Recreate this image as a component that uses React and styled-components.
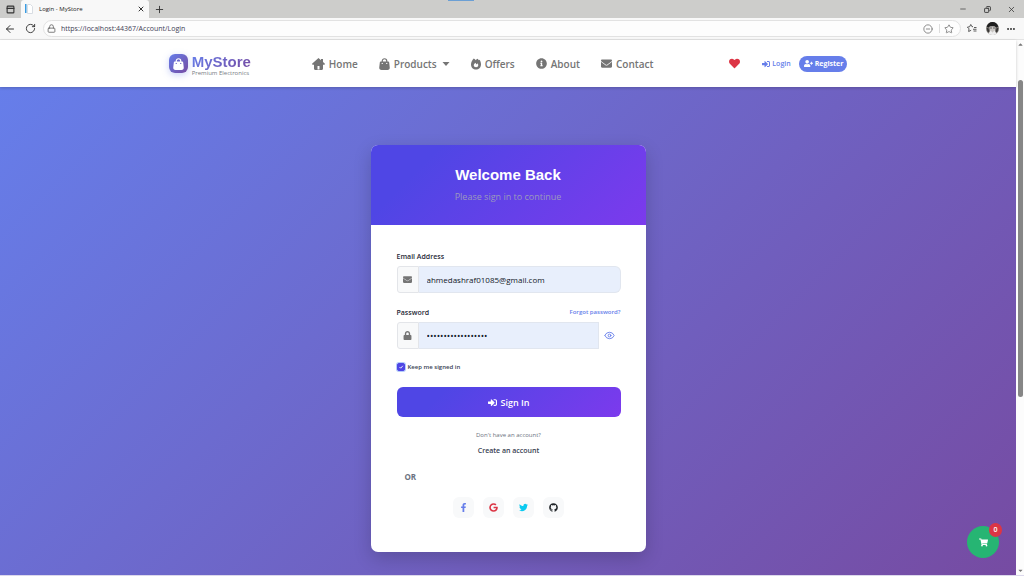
import React, { useState } from 'react';
import styled, { createGlobalStyle } from 'styled-components';
import {
  FaInfoCircle,
  FaEnvelope,
  FaHeart,
  FaSignInAlt,
  FaUserPlus,
  FaLock,
  FaCaretDown,
  FaCaretUp,
  FaFacebookF,
  FaGoogle,
  FaTwitter,
  FaGithub,
  FaShoppingCart,
} from 'react-icons/fa';
import { ArrowLeft, RotateCw, Lock, CircleMinus, Star, X, Plus, Minus, Copy, Ellipsis, Eye, PanelTop } from 'lucide-react';

const GlobalStyle = createGlobalStyle`
  * {
    box-sizing: border-box;
  }

  body {
    margin: 0;
    font-family: "Open Sans", "Noto Sans", sans-serif;
    color: #212529;
  }

  button, input {
    font-family: inherit;
  }

  button {
    padding: 0;
    border: 0;
    background: none;
    color: inherit;
    cursor: pointer;
  }

  a {
    text-decoration: none;
    color: inherit;
  }
`;

const Window = styled.div`
  display: flex;
  flex-direction: column;
  min-height: 100vh;
  border-bottom: 1px solid #dcd8ec;
  background: #fff;
`;

/* browser frame */

const TabStrip = styled.div`
  display: flex;
  align-items: center;
  height: 18px;
  background: linear-gradient(to right, transparent 448px, #6b9fd4 448px, #6b9fd4 474px, transparent 474px) top / 100% 1px no-repeat #cdcdcb;
`;

const IconButton = styled.button`
  display: flex;
  align-items: center;
  justify-content: center;
  align-self: center;
  flex: none;
  width: ${(props) => props.$width || 20}px;
  height: 16px;
  color: ${(props) => props.$color || '#333'};
`;

const Tab = styled.div`
  display: flex;
  align-items: center;
  gap: 6px;
  width: 128px;
  height: 18px;
  padding-left: 4px;
  border-radius: 3px 3px 0 0;
  background: #f8f8f8;
  font-size: 6px;
  color: #222;
`;

const TabTitle = styled.span`
  flex: 1;
`;

const WindowControls = styled.div`
  display: flex;
  margin-left: auto;
  padding-right: 1px;
`;

const Toolbar = styled.div`
  display: flex;
  align-items: center;
  height: 22px;
  padding-right: 3px;
  border-bottom: 1px solid #e4e4e4;
  background: #f8f8f8;
`;

const AddressBar = styled.div`
  display: flex;
  align-items: center;
  flex: 1;
  height: 17px;
  margin-left: 3px;
  padding: 0 2px 0 3px;
  border: 1px solid #e2e2e2;
  border-radius: 9px;
  background: #fdfdfd;
`;

const AddressInput = styled.input`
  flex: 1;
  min-width: 0;
  margin-left: 5px;
  padding: 0;
  border: 0;
  outline: 0;
  background: none;
  font-size: 7px;
  color: #3d3d55;
`;

const AddressDivider = styled.span`
  width: 1px;
  height: 9px;
  background: #ddd;
`;

const Viewport = styled.div`
  display: flex;
  flex: 1;
`;

const Page = styled.div`
  display: flex;
  flex-direction: column;
  flex: 1;
`;

const Scrollbar = styled.div`
  display: flex;
  flex-direction: column;
  align-items: center;
  justify-content: space-between;
  width: 8px;
  padding: 1px 0;
  background: #fcfcfc;
  color: #777;
`;

const ScrollTrack = styled.div`
  flex: 1;
  width: 5px;
  padding-top: 32px;
`;

const ScrollThumb = styled.div`
  height: 65%;
  border-radius: 3px;
  background: #868686;
`;

/* site header */

const Header = styled.header`
  display: flex;
  justify-content: center;
  position: relative;
  height: 47px;
  background: #fff;
  box-shadow: 0 1px 3px rgba(0, 0, 0, 0.2);
`;

const HeaderContainer = styled.div`
  display: flex;
  align-items: center;
  width: 67%;
  padding: 0 1px;
`;

const Brand = styled.a`
  display: flex;
  align-items: center;
  gap: 4px;
`;

const BrandLogo = styled.span`
  display: flex;
  align-items: center;
  justify-content: center;
  width: 19px;
  height: 19px;
  border-radius: 6px;
  background: linear-gradient(135deg, #667eea, #764ba2);
  box-shadow: 0 2px 7px rgba(102, 126, 234, 0.35);
  color: #fff;
`;

const BrandText = styled.span`
  display: flex;
  flex-direction: column;
  padding-top: 3px;
`;

const BrandName = styled.span`
  font-family: "Liberation Sans", Arial, sans-serif;
  font-size: 15px;
  font-weight: bold;
  line-height: 16px;
  background: linear-gradient(135deg, #667eea, #764ba2);
  background-clip: text;
  color: transparent;
`;

const BrandTagline = styled.span`
  font-size: 6px;
  line-height: 7px;
  color: #777c82;
`;

const Nav = styled.nav`
  display: flex;
  align-items: center;
  gap: 21px;
  margin-left: 61px;
`;

const NavLink = styled.a`
  display: flex;
  align-items: center;
  gap: 4px;
  font-size: 10px;
  font-weight: 600;
  color: #757575;
`;

const HeaderActions = styled.div`
  display: flex;
  align-items: center;
  margin-left: auto;
  font-size: 7px;
  font-weight: 600;
`;

const WishlistLink = styled.a`
  display: flex;
  margin-right: 22px;
  color: #dc3545;
`;

const LoginLink = styled.a`
  display: flex;
  align-items: center;
  gap: 2px;
  margin-right: 8px;
  color: #667eea;
`;

const RegisterLink = styled.a`
  display: flex;
  align-items: center;
  gap: 2px;
  height: 16px;
  padding: 0 4px 0 5px;
  border-radius: 8px;
  background: #667eea;
  font-weight: 700;
  color: #fff;
`;

/* login card */

const Main = styled.main`
  display: flex;
  justify-content: center;
  align-items: flex-start;
  flex: 1;
  padding: 58px 16px 23px;
  background: linear-gradient(135deg, #667eea 0%, #764ba2 100%);
`;

const Card = styled.section`
  width: 100%;
  max-width: 275px;
  border-radius: 7px;
  overflow: hidden;
  background: #fff;
  box-shadow: 0 6px 18px rgba(0, 0, 0, 0.18);
`;

const CardHeader = styled.div`
  padding: 21px 0;
  background: linear-gradient(135deg, #4f46e5 20%, #7c3aed);
  text-align: center;
`;

const Title = styled.h1`
  margin: 0 0 6px;
  font-family: "Liberation Sans", Arial, sans-serif;
  font-size: 15px;
  line-height: 18px;
  color: #fff;
`;

const Subtitle = styled.p`
  margin: 0;
  font-size: 9px;
  line-height: 14px;
  color: #9c99bd;
`;

const CardBody = styled.form`
  display: flex;
  flex-direction: column;
  padding: 25px 25px 34px 26px;
`;

const LabelRow = styled.div`
  display: flex;
  justify-content: space-between;
  align-items: center;
  height: 12px;
  margin-bottom: 4px;
`;

const Label = styled.label`
  font-size: 7px;
  font-weight: 600;
  color: #1f2937;
`;

const ForgotLink = styled.a`
  font-size: 6px;
  font-weight: 600;
  color: #667eea;
`;

const InputGroup = styled.div`
  display: flex;
  height: 27px;
  margin-bottom: 13px;
`;

const InputIcon = styled.span`
  display: flex;
  align-items: center;
  justify-content: center;
  width: 22px;
  border: 1px solid #e3e5e9;
  border-radius: 3px 0 0 3px;
  background: #f8f9fa;
  color: #757575;
`;

const TextInput = styled.input`
  flex: 1;
  min-width: 0;
  padding: 0 8px;
  border: 1px solid #e1e6ef;
  border-left: 0;
  border-radius: ${(props) => (props.$rounded ? '0 6px 6px 0' : '0')};
  outline: 0;
  background: #e8effc;
  font-size: ${(props) => (props.type === 'password' ? 9 : 8)}px;
  color: #111827;
`;

const Remember = styled.label`
  display: flex;
  align-items: center;
  gap: 3px;
  height: 10px;
  margin-bottom: 15px;
  font-size: 6px;
  font-weight: 600;
  color: #374151;
`;

const Checkbox = styled.input`
  appearance: none;
  width: 8px;
  height: 8px;
  margin: 0;
  border: 1px solid #4f46e5;
  border-radius: 2px;
  box-shadow: 0 0 0 1px #b5cdfb;

  &:checked {
    background: #4f46e5 url("data:image/svg+xml,%3Csvg xmlns='http://www.w3.org/2000/svg' viewBox='0 0 20 20'%3E%3Cpath fill='none' stroke='%23fff' stroke-width='3' d='m5 10 4 4 7-8'/%3E%3C/svg%3E");
  }
`;

const SubmitButton = styled.button`
  display: flex;
  align-items: center;
  justify-content: center;
  gap: 4px;
  height: 30px;
  margin-bottom: 13px;
  border-radius: 6px;
  background: linear-gradient(135deg, #4f46e5 20%, #7c3aed);
  font-size: 9px;
  font-weight: 600;
  color: #fff;
`;

const SignUp = styled.div`
  display: flex;
  flex-direction: column;
  align-items: center;
  gap: 6px;
  font-size: 6px;
  line-height: 10px;
  color: #6b7280;
`;

const SignUpLink = styled.a`
  font-size: 7px;
  font-weight: 600;
  color: #374151;
`;

const Divider = styled.div`
  margin: 15px 0 14px;
  padding-left: 8px;
  font-size: 8px;
  font-weight: 700;
  line-height: 12px;
  color: #6b7280;
`;

const SocialList = styled.div`
  display: flex;
  justify-content: center;
  gap: 9px;
`;

const SocialButton = styled.button`
  display: flex;
  align-items: center;
  justify-content: center;
  width: 21px;
  height: 21px;
  border-radius: 6px;
  background: #f8f9fa;
  color: ${(props) => props.$color};
`;

const CartButton = styled.button`
  display: flex;
  align-items: center;
  justify-content: center;
  position: fixed;
  right: 25px;
  bottom: 18px;
  width: 32px;
  height: 32px;
  border-radius: 50%;
  background: #26b573;
  color: #fff;
`;

const CartBadge = styled.span`
  position: absolute;
  top: -3px;
  right: -3px;
  width: 13px;
  height: 14px;
  border-radius: 7px;
  background: #dc3545;
  font-size: 7px;
  font-weight: 600;
  line-height: 14px;
`;

const PageIcon = () => (
  <svg width="8" height="10" viewBox="0 0 8 10">
    <path d="M0 0v9" stroke="#3b9be0" strokeWidth="3" />
    <path d="M2.500 .5h3l2 2v7h-5z" fill="#fff" stroke="#d8dde3" />
  </svg>
);

const HouseIcon = () => (
  <svg width="13" height="12" viewBox="0 0 26 24" fill="currentColor">
    <path
      fillRule="evenodd"
      d="M13 0 .6 11c-1 .9-.4 2.500 1 2.500H4V21c0 1.700 1 3 3 3h12c2 0 3-1.300 3-3v-7.500h2.400c1.400 0 2-1.600 1-2.500L22 8V2h-4v2.500zM11 16h4v7h-4z"
    />
  </svg>
);

const BagIcon = () => (
  <svg width="11" height="12" viewBox="0 0 22 24" fill="currentColor">
    <path d="M6.500 9V6a4.500 4.500 0 0 1 9 0v3" fill="none" stroke="currentColor" strokeWidth="2.400" />
    <path
      fillRule="evenodd"
      d="M3.500 7h15c1 0 1.600.6 1.800 1.500L21.500 19c.3 3-1.500 5-4.500 5H5c-3 0-4.800-2-4.500-5L1.700 8.500C1.900 7.600 2.500 7 3.500 7zm3 2.500a1.300 1.300 0 1 0 0 2.600 1.300 1.300 0 0 0 0-2.600zm9 0a1.300 1.300 0 1 0 0 2.600 1.300 1.300 0 0 0 0-2.600z"
    />
  </svg>
);

const FireIcon = () => (
  <svg width="10" height="12" viewBox="0 0 20 24" fill="currentColor">
    <path
      fillRule="evenodd"
      d="M5.500 1c2 1 3 2 4 3.500C10.500 3 12 1.500 13.500 1.500l2 3 1.500-1C19 6.300 20 9.500 20 13c0 6-4.500 10-10 10S0 19 0 13C0 8.500 2.500 4.500 5.500 1zM10 18.500c2.700 0 4.500-1.600 4.500-4 0-1.400-.6-2.700-1.400-3.800l-1.800 2.100L8.700 9.500C6.800 11.500 5.500 12.900 5.500 14.600c0 2.400 2 3.900 4.500 3.900z"
    />
  </svg>
);

const CaretIcon = () => (
  <svg width="9" height="4" viewBox="0 0 9 4" fill="currentColor">
    <path d="M1.500 0h7L5 4z" />
  </svg>
);

const FavoritesIcon = () => (
  <svg width="10" height="9" viewBox="0 0 20 18" fill="none" stroke="currentColor" strokeWidth="1.600">
    <path d="M12 5.500 9.700 5 7.500 1 5.200 5.500.8 6.300 4 9.600 3.300 15l5-2.500M14 7h5M12 10.500h7M13 14h6" />
  </svg>
);

const Avatar = () => (
  <svg width="13" height="13" viewBox="0 0 26 26">
    <circle cx="13" cy="13" r="13" fill="#77736f" />
    <path d="M1.500 9C3 3.500 7.500 0 13 0s10 3.500 11.500 9l-4 2-4-3-4 1-4-1-4 3z" fill="#1e1e1e" />
    <path d="M7 10c3-2 9-2 12 0l-1 8-5 4-5-4z" fill="#c9c6c3" />
    <path d="M8 12h4m2 0h4" stroke="#444" strokeWidth="1.500" />
    <path d="M5 23l4-6 4 4 4-4 4 6c-5 4-11 4-16 0z" fill="#eee" />
    <path d="M2 12l3 1 1 7-3-1zm22 0-3 1-1 7 3-1z" fill="#292929" />
  </svg>
);

const navItems = [
  { label: 'Home', icon: <HouseIcon /> },
  { label: 'Products', icon: <BagIcon />, dropdown: true },
  { label: 'Offers', icon: <FireIcon /> },
  { label: 'About', icon: <FaInfoCircle size={11} /> },
  { label: 'Contact', icon: <FaEnvelope size={11} /> },
];

const socials = [
  { name: 'Facebook', color: '#667eea', icon: <FaFacebookF size={9} /> },
  { name: 'Google', color: '#dc3545', icon: <FaGoogle size={9} /> },
  { name: 'Twitter', color: '#0dcaf0', icon: <FaTwitter size={9} /> },
  { name: 'GitHub', color: '#212529', icon: <FaGithub size={9} /> },
];

const BrowserFrame = () => (
  <>
    <TabStrip>
      <IconButton $width={21} aria-label="Tab actions"><PanelTop size={9} strokeWidth={3} /></IconButton>
      <Tab>
        <PageIcon />
        <TabTitle>Login - MyStore</TabTitle>
        <IconButton $width={16} aria-label="Close tab"><X size={8} strokeWidth={3} /></IconButton>
      </Tab>
      <IconButton aria-label="New tab"><Plus size={11} /></IconButton>
      <WindowControls>
        <IconButton $width={24} aria-label="Minimize"><Minus size={8} /></IconButton>
        <IconButton $width={24} aria-label="Restore"><Copy size={7} strokeWidth={3} transform="scale(-1 1)" /></IconButton>
        <IconButton $width={24} aria-label="Close"><X size={9} /></IconButton>
      </WindowControls>
    </TabStrip>
    <Toolbar>
      <IconButton aria-label="Back"><ArrowLeft size={12} /></IconButton>
      <IconButton aria-label="Refresh"><RotateCw size={11} /></IconButton>
      <AddressBar>
        <Lock size={9} color="#555" />
        <AddressInput aria-label="Address" defaultValue="https://localhost:44367/Account/Login" />
        <IconButton $color="#777" $width={22} aria-label="Zoom"><CircleMinus size={10} /></IconButton>
        <AddressDivider />
        <IconButton $color="#777" $width={18} aria-label="Add to favorites"><Star size={10} /></IconButton>
      </AddressBar>
      <IconButton $width={22} aria-label="Favorites"><FavoritesIcon /></IconButton>
      <IconButton $width={18} aria-label="Profile"><Avatar /></IconButton>
      <IconButton aria-label="Settings"><Ellipsis size={10} strokeWidth={3} /></IconButton>
    </Toolbar>
  </>
);

const SiteHeader = () => (
  <Header>
    <HeaderContainer>
      <Brand href="#">
        <BrandLogo><BagIcon /></BrandLogo>
        <BrandText>
          <BrandName>MyStore</BrandName>
          <BrandTagline>Premium Electronics</BrandTagline>
        </BrandText>
      </Brand>
      <Nav>
        {navItems.map((item) => (
          <NavLink href="#" key={item.label}>
            {item.icon}
            {item.label}
            {item.dropdown && <CaretIcon />}
          </NavLink>
        ))}
      </Nav>
      <HeaderActions>
        <WishlistLink href="#" aria-label="Wishlist"><FaHeart size={11} /></WishlistLink>
        <LoginLink href="#"><FaSignInAlt size={8} />Login</LoginLink>
        <RegisterLink href="#"><FaUserPlus size={9} />Register</RegisterLink>
      </HeaderActions>
    </HeaderContainer>
  </Header>
);

const LoginCard = () => {
  const [showPassword, setShowPassword] = useState(false);

  return (
    <Card>
      <CardHeader>
        <Title>Welcome Back</Title>
        <Subtitle>Please sign in to continue</Subtitle>
      </CardHeader>
      <CardBody onSubmit={(e) => e.preventDefault()}>
        <LabelRow>
          <Label htmlFor="email">Email Address</Label>
        </LabelRow>
        <InputGroup>
          <InputIcon><FaEnvelope size={9} /></InputIcon>
          <TextInput id="email" type="email" defaultValue="ahmedashraf01085@gmail.com" $rounded />
        </InputGroup>
        <LabelRow>
          <Label htmlFor="password">Password</Label>
          <ForgotLink href="#">Forgot password?</ForgotLink>
        </LabelRow>
        <InputGroup>
          <InputIcon><FaLock size={9} /></InputIcon>
          <TextInput id="password" type={showPassword ? 'text' : 'password'} defaultValue="correcthorsebatter" />
          <IconButton
            type="button"
            $width={22}
            $color="#667eea"
            aria-label="Show password"
            onClick={() => setShowPassword(!showPassword)}
          >
            <Eye size={11} />
          </IconButton>
        </InputGroup>
        <Remember>
          <Checkbox type="checkbox" defaultChecked />
          Keep me signed in
        </Remember>
        <SubmitButton type="submit"><FaSignInAlt size={9} />Sign In</SubmitButton>
        <SignUp>
          <span>Don't have an account?</span>
          <SignUpLink href="#">Create an account</SignUpLink>
        </SignUp>
        <Divider>OR</Divider>
        <SocialList>
          {socials.map((social) => (
            <SocialButton type="button" key={social.name} $color={social.color} aria-label={social.name}>
              {social.icon}
            </SocialButton>
          ))}
        </SocialList>
      </CardBody>
    </Card>
  );
};

const App = () => (
  <>
    <GlobalStyle />
    <Window>
      <BrowserFrame />
      <Viewport>
        <Page>
          <SiteHeader />
          <Main>
            <LoginCard />
          </Main>
        </Page>
        <Scrollbar>
          <FaCaretUp size={7} />
          <ScrollTrack>
            <ScrollThumb />
          </ScrollTrack>
          <FaCaretDown size={7} />
        </Scrollbar>
      </Viewport>
    </Window>
    <CartButton aria-label="Cart">
      <FaShoppingCart size={9} />
      <CartBadge>0</CartBadge>
    </CartButton>
  </>
);

export default App;
